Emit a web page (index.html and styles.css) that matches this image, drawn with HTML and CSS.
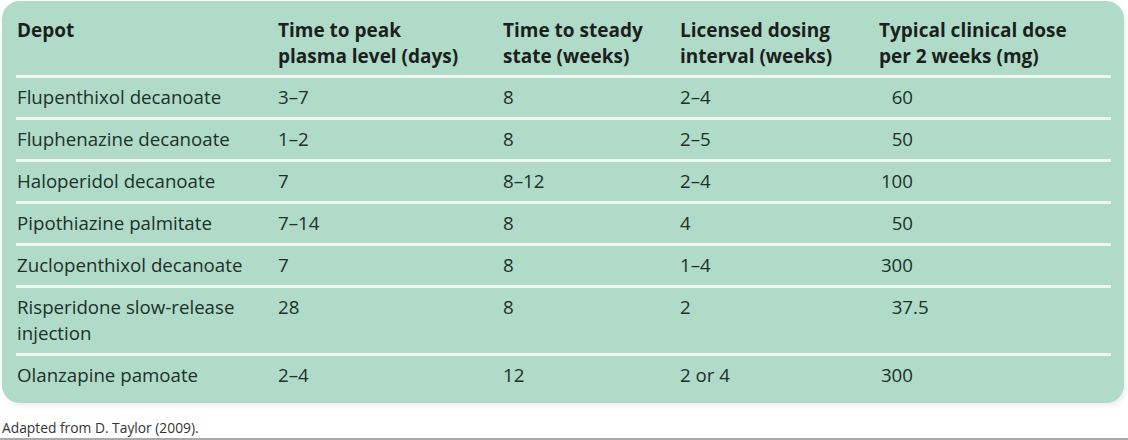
FILE: index.html
```html
<!DOCTYPE html>
<html>
<head>
<meta charset="utf-8">
<link rel="stylesheet" href="styles.css">
</head>
<body>
<div class="page">
  <div class="box">
    <table class="depot-table">
      <colgroup>
        <col class="c1"><col class="c2"><col class="c3"><col class="c4"><col class="c5">
      </colgroup>
      <thead>
        <tr>
          <th>Depot</th>
          <th>Time to peak<br>plasma level (days)</th>
          <th>Time to steady<br>state (weeks)</th>
          <th>Licensed dosing<br>interval (weeks)</th>
          <th>Typical clinical dose<br>per 2 weeks (mg)</th>
        </tr>
      </thead>
      <tbody>
        <tr><td>Flupenthixol decanoate</td><td>3–7</td><td>8</td><td>2–4</td><td><span class="int">60</span></td></tr>
        <tr><td>Fluphenazine decanoate</td><td>1–2</td><td>8</td><td>2–5</td><td><span class="int">50</span></td></tr>
        <tr><td>Haloperidol decanoate</td><td>7</td><td>8–12</td><td>2–4</td><td><span class="int">100</span></td></tr>
        <tr><td>Pipothiazine palmitate</td><td>7–14</td><td>8</td><td>4</td><td><span class="int">50</span></td></tr>
        <tr><td>Zuclopenthixol decanoate</td><td>7</td><td>8</td><td>1–4</td><td><span class="int">300</span></td></tr>
        <tr><td>Risperidone slow-release<br>injection</td><td>28</td><td>8</td><td>2</td><td><span class="int">37</span>.5</td></tr>
        <tr class="last"><td>Olanzapine pamoate</td><td>2–4</td><td>12</td><td>2 or 4</td><td><span class="int">300</span></td></tr>
      </tbody>
    </table>
  </div>
  <p class="source">Adapted from D. Taylor (2009).</p>
</div>
</body>
</html>
```
FILE: styles.css
```css
html, body {
  margin: 0;
  padding: 0;
  background: #ffffff;
}
body {
  width: 1128px;
  height: 440px;
  overflow: hidden;
  font-family: "Open Sans", "Noto Sans", sans-serif;
  color: #21302a;
}
.page {
  height: 440px;
  box-sizing: border-box;
  padding: 1px 4px 0 2px;
  border-bottom: 2px solid #a9a9a9;
  display: flex;
  flex-direction: column;
}
.box {
  background: #b0dbc8;
  border-radius: 18px;
  padding: 16px 13px 8px 14px;
  box-shadow: 2px 3px 5px rgba(0, 0, 0, 0.07);
}
.depot-table {
  width: 100%;
  border-collapse: collapse;
  table-layout: fixed;
  font-size: 18.7px;
}
.c1 { width: 261px; }
.c2 { width: 225px; }
.c3 { width: 177px; }
.c4 { width: 199px; }
.c5 { width: auto; }
.depot-table th {
  text-align: left;
  vertical-align: top;
  font-weight: 700;
  font-size: 19px;
  color: #1b1f1d;
  line-height: 26px;
  padding: 0 0 6px 1px;
  border-bottom: 3px solid #eef7f2;
}
.depot-table td {
  text-align: left;
  vertical-align: top;
  line-height: 26px;
  padding: 6px 0 7px 1px;
  border-bottom: 3px solid #eef7f2;
}
.depot-table tr.last td {
  border-bottom: none;
}
.int {
  display: inline-block;
  width: 34px;
  text-align: right;
}
.source {
  margin: 15px 0 0 0;
  font-size: 13.8px;
  color: #333333;
}
```
